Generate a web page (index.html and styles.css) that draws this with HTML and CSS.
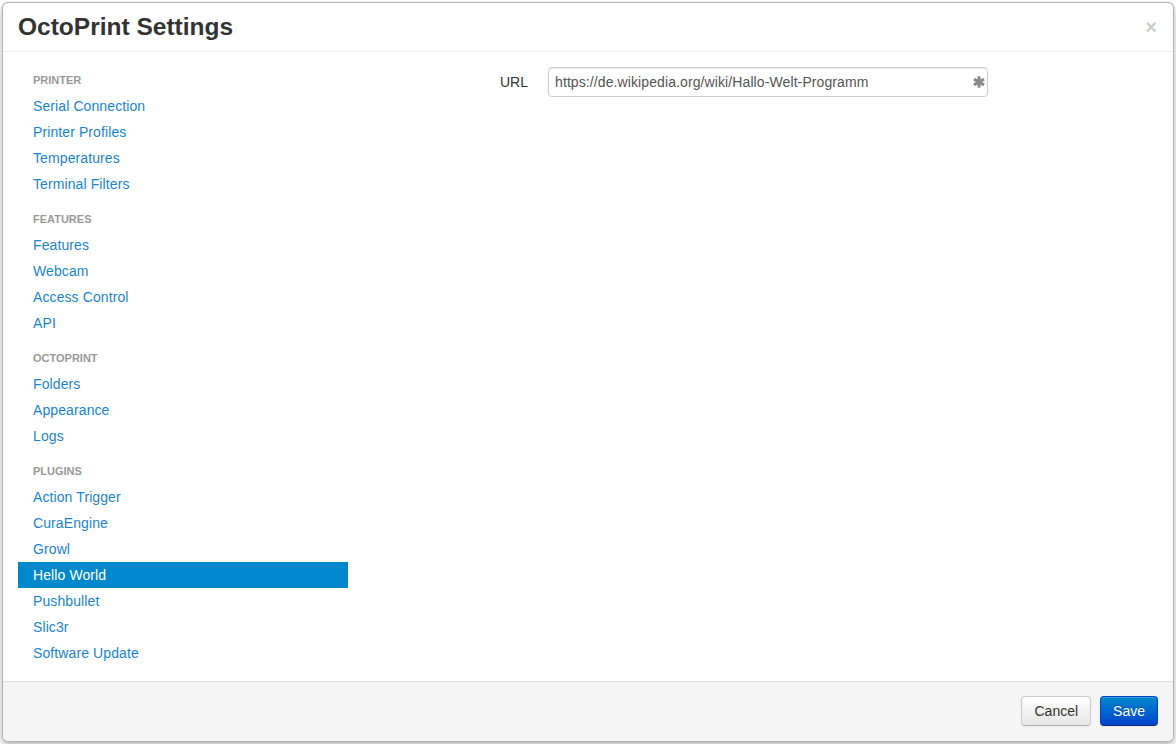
FILE: index.html
```html
<!DOCTYPE html>
<html lang="en">
<head>
  <meta charset="UTF-8" />
  <title>OctoPrint Settings</title>
  <link rel="stylesheet" href="styles.css">
</head>
<body>
  <div class="modal">

    <!-- Header -->
    <div class="modal-header">
      <h3>OctoPrint Settings</h3>
      <span class="close">&times;</span>
    </div>

    <!-- Body: section list on the left, active section on the right -->
    <div class="modal-body">
      <ul class="nav-list">
        <li class="nav-header">Printer</li>
        <li><a href="#">Serial Connection</a></li>
        <li><a href="#">Printer Profiles</a></li>
        <li><a href="#">Temperatures</a></li>
        <li><a href="#">Terminal Filters</a></li>

        <li class="nav-header">Features</li>
        <li><a href="#">Features</a></li>
        <li><a href="#">Webcam</a></li>
        <li><a href="#">Access Control</a></li>
        <li><a href="#">API</a></li>

        <li class="nav-header">OctoPrint</li>
        <li><a href="#">Folders</a></li>
        <li><a href="#">Appearance</a></li>
        <li><a href="#">Logs</a></li>

        <li class="nav-header">Plugins</li>
        <li><a href="#">Action Trigger</a></li>
        <li><a href="#">CuraEngine</a></li>
        <li><a href="#">Growl</a></li>
        <li class="active"><a href="#">Hello World</a></li>
        <li><a href="#">Pushbullet</a></li>
        <li><a href="#">Slic3r</a></li>
        <li><a href="#">Software Update</a></li>
      </ul>

      <div class="tab-content">
        <div class="control-group">
          <label class="control-label">URL</label>
          <div class="controls">
            <div class="input-wrap">
              <input type="text" value="https://de.wikipedia.org/wiki/Hallo-Welt-Programm">
              <svg class="asterisk" viewBox="0 0 12 12" width="12" height="12">
                <g stroke="#8a8a8a" stroke-width="3" stroke-linecap="butt">
                  <line x1="6" y1="0.3" x2="6" y2="11.7"/>
                  <line x1="1" y1="3.1" x2="11" y2="8.9"/>
                  <line x1="1" y1="8.9" x2="11" y2="3.1"/>
                </g>
              </svg>
            </div>
          </div>
        </div>
      </div>
    </div>

    <!-- Footer -->
    <div class="modal-footer">
      <button class="btn">Cancel</button>
      <button class="btn btn-primary">Save</button>
    </div>

  </div>
</body>
</html>
```

FILE: styles.css
```css
* {
  margin: 0;
  padding: 0;
  box-sizing: border-box;
}

body {
  background: #fff;
  font-family: "Liberation Sans", Arial, sans-serif;
  font-size: 14px;
  line-height: 20px;
  color: #333;
}

.modal {
  margin: 2px;
  width: 1172px;
  height: 740px;
  background: #fff;
  border: 1px solid rgba(0, 0, 0, 0.3);
  border-radius: 6px;
  box-shadow: 0 3px 7px rgba(0, 0, 0, 0.3);
  display: flex;
  flex-direction: column;
  overflow: hidden;
}

.modal-header {
  display: flex;
  align-items: center;
  justify-content: space-between;
  padding: 9px 15px;
  border-bottom: 1px solid #eee;
}

.modal-header h3 {
  font-size: 24.5px;
  line-height: 30px;
  font-weight: bold;
  color: #333;
}

.close {
  font-size: 20px;
  font-weight: bold;
  line-height: 20px;
  color: #000;
  opacity: 0.2;
  margin-right: 1px;
}

.modal-body {
  flex: 1;
  display: flex;
  padding: 15px;
}

.nav-list {
  list-style: none;
  width: 330px;
}

.nav-list li a {
  display: block;
  padding: 3px 15px;
  color: #1a85cf;
  text-decoration: none;
  letter-spacing: 0.1px;
}

.nav-header {
  padding: 3px 15px;
  font-size: 11px;
  font-weight: bold;
  line-height: 20px;
  color: #999;
  text-transform: uppercase;
}

.nav-list li + .nav-header {
  margin-top: 9px;
}

.nav-list .active a {
  background: #0088cc;
  color: #fff;
}

.tab-content {
  flex: 1;
  padding-left: 40px;
}

.control-group {
  display: flex;
}

.control-label {
  width: 140px;
  padding-top: 5px;
  text-align: right;
  color: #333;
}

.controls {
  margin-left: 20px;
}

.input-wrap {
  position: relative;
  width: 440px;
}

.input-wrap input {
  width: 440px;
  height: 30px;
  padding: 4px 6px;
  font-family: inherit;
  font-size: 14px;
  color: #555;
  letter-spacing: 0.1px;
  border: 1px solid #ccc;
  border-radius: 4px;
  box-shadow: inset 0 1px 1px rgba(0, 0, 0, 0.075);
}

.asterisk {
  position: absolute;
  right: 3px;
  top: 9px;
}

.modal-footer {
  display: flex;
  justify-content: flex-end;
  gap: 9px;
  padding: 14px 15px 15px;
  background: #f5f5f5;
  border-top: 1px solid #ddd;
}

.btn {
  height: 30px;
  padding: 4px 12px;
  font-family: inherit;
  font-size: 14px;
  line-height: 20px;
  color: #333;
  background: linear-gradient(#fff, #e6e6e6);
  border: 1px solid #ccc;
  border-bottom-color: #b3b3b3;
  border-radius: 4px;
  box-shadow: inset 0 1px 0 rgba(255, 255, 255, 0.2), 0 1px 2px rgba(0, 0, 0, 0.05);
}

.btn-primary {
  color: #fff;
  background: linear-gradient(#0088cc, #0044cc);
  border-color: #0044cc #0044cc #002a80;
  text-shadow: 0 -1px 0 rgba(0, 0, 0, 0.25);
}
```
